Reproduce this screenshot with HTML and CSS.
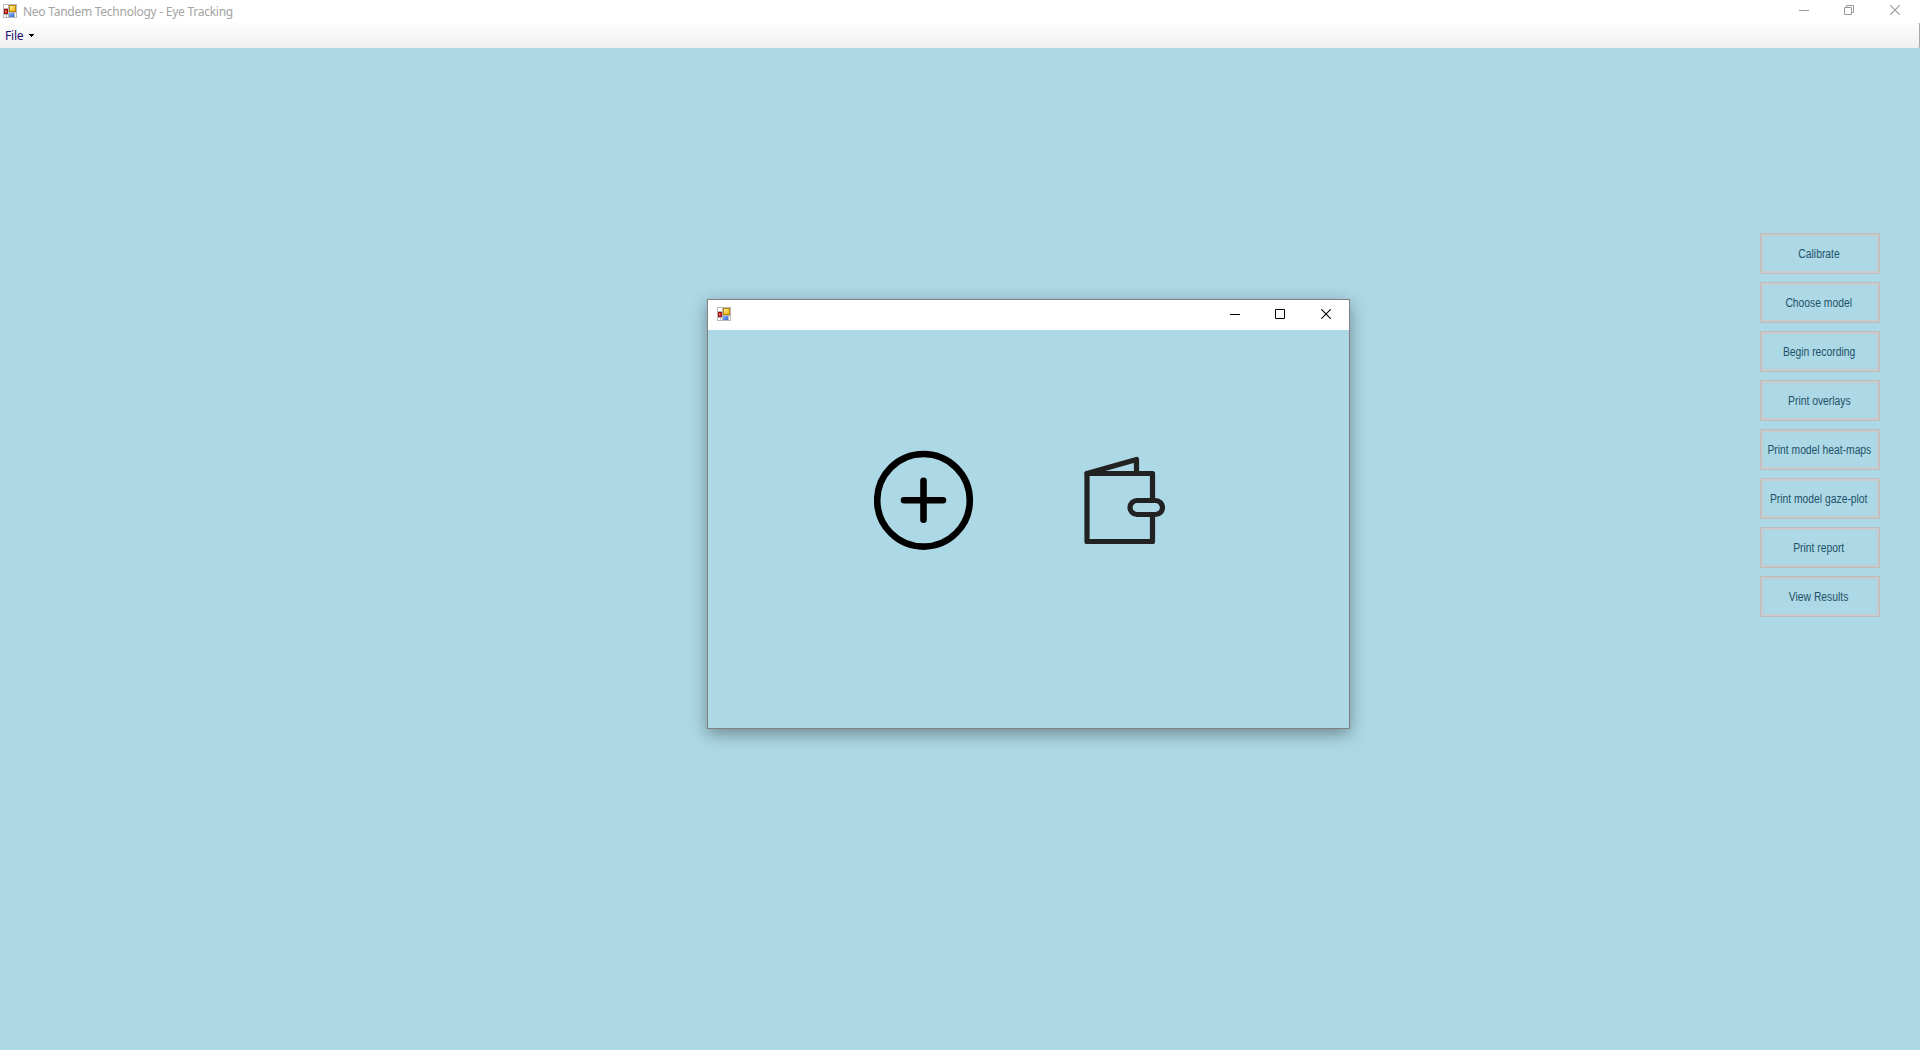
FILE: index.html
```html
<!DOCTYPE html>
<html lang="en">
<head>
<meta charset="utf-8">
<title>Neo Tandem Technology - Eye Tracking</title>
<link rel="stylesheet" href="styles.css">
</head>
<body>
<svg width="0" height="0" class="defs">
  <defs>
    <linearGradient id="gold" x1="0" y1="0" x2="1" y2="1"><stop offset="0" stop-color="#fff2a0"/><stop offset="1" stop-color="#f0b000"/></linearGradient>
    <linearGradient id="blue" x1="0" y1="0" x2="1" y2="1"><stop offset="0" stop-color="#8cb4ff"/><stop offset="1" stop-color="#3468c8"/></linearGradient>
    <symbol id="app" viewBox="0 0 14 14">
      <path fill="#b9b9b9" d="M0 0h14v14H0z"/>
      <path fill="#fff" d="M1 1h4v3H1zM1 11h2v2H1zM4 11h1v2H4zM12 9h1v4h-1z"/>
      <path fill="#b88400" d="M6 1h7v7H6z"/>
      <path fill="url(#gold)" d="M7 2h5v5H7z"/>
      <path fill="#a01010" d="M1 5h4v5H1z"/>
      <path fill="#d83a2c" d="M2 6h2v3H2z"/>
      <path fill="#f0b0a0" d="M2 7h1v1H2z"/>
      <path fill="url(#blue)" d="M6 9h5v4H6z"/>
    </symbol>
    <symbol id="close" viewBox="0 0 10 10"><path d="M.3.3l9.4 9.4M9.7.3L.3 9.7" fill="none" stroke="currentColor" stroke-width="1.1"/></symbol>
    <symbol id="min" viewBox="0 0 10 10"><path d="M0 5.5h10" stroke="currentColor"/></symbol>
  </defs>
</svg>
<header class="titlebar">
  <svg class="app-icon"><use href="#app"/></svg>
  <h1 class="title">Neo Tandem Technology - Eye Tracking</h1>
  <div class="controls">
    <svg><use href="#min"/></svg>
    <svg viewBox="0 0 10 10"><path d="M.5 2.5h7v7h-7zM2.5 2.5v-2h7v7h-2" fill="none" stroke="currentColor"/></svg>
    <svg class="last"><use href="#close"/></svg>
  </div>
</header>
<nav class="menubar">
  <span class="menu-item">File</span>
  <svg class="arrow" viewBox="0 0 5 3"><path d="M0 0h5v1H4v1H3v1H2V2H1V1H0z"/></svg>
</nav>
<main class="workspace">
  <div class="actions">
    <button class="action"><span>Calibrate</span></button>
    <button class="action"><span>Choose model</span></button>
    <button class="action"><span>Begin recording</span></button>
    <button class="action"><span>Print overlays</span></button>
    <button class="action"><span>Print model heat-maps</span></button>
    <button class="action"><span>Print model gaze-plot</span></button>
    <button class="action"><span>Print report</span></button>
    <button class="action"><span>View Results</span></button>
  </div>
</main>
<section class="dialog">
  <div class="dialog-bar">
    <svg class="app-icon"><use href="#app"/></svg>
    <div class="controls">
      <svg><use href="#min"/></svg>
      <svg viewBox="0 0 10 10"><path d="M.5.5h9v9h-9z" fill="none" stroke="currentColor"/></svg>
      <svg class="last"><use href="#close"/></svg>
    </div>
  </div>
  <div class="choices">
    <svg class="add" viewBox="0 0 100 100"><g fill="none" stroke="#000" stroke-width="6.6" stroke-linecap="round"><circle cx="49.500" cy="50.300" r="46.300"/><path d="M49.500 30.900v38.800M30 50.300h39"/></g></svg>
    <svg class="wallet" viewBox="0 0 82 90"><g fill="none" stroke="#222" stroke-width="5.2" stroke-linejoin="round" stroke-linecap="round"><path stroke-linecap="butt" d="M69.500 44.500V17.500H4v68h65.500V58"/><path d="M4 17.500L53.500 3.500v14"/><rect x="47" y="44.500" width="32.500" height="14" rx="7"/></g></svg>
  </div>
</section>
</body>
</html>
```
FILE: styles.css
```css
* { box-sizing: border-box; }
body {
  margin: 0;
  height: 1050px;
  overflow: hidden;
  display: flex;
  flex-direction: column;
  background: #add8e6;
  font-family: "Noto Sans", "Open Sans", sans-serif;
  font-size: 12px;
}
svg { display: block; flex: none; }
.defs { position: absolute; }
.app-icon { width: 14px; height: 14px; }
.titlebar {
  height: 23px;
  flex: none;
  display: flex;
  align-items: flex-start;
  padding: 4px 20px 0 3px;
  background: #fff;
  color: #999;
}
.title {
  margin: 0 auto 0 6px;
  font-size: 12px;
  font-weight: 400;
  line-height: 16px;
  letter-spacing: -0.26px;
  white-space: nowrap;
  color: #a3a3a3;
}
.controls { display: flex; gap: 35px; padding-top: 1px; }
.controls svg { width: 10px; height: 10px; }
.controls .last { margin-left: 1px; }
.menubar {
  height: 25px;
  flex: none;
  display: flex;
  align-items: center;
  padding: 0 0 1px 5px;
  background: linear-gradient(#fdfdfd, #f0f0f0);
  border-right: 1px solid #aaa;
  border-radius: 0 2px 2px 0;
}
.menu-item { color: #1a0f70; letter-spacing: -0.2px; }
.arrow { width: 5px; height: 3px; margin: 1px 0 0 6px; }
.workspace {
  flex: 1;
  display: flex;
  justify-content: flex-end;
  padding: 185px 40px 0 0;
}
.actions { display: flex; flex-direction: column; gap: 8px; }
.action {
  width: 120px;
  height: 41px;
  padding: 0 2px 0 0;
  border: 1px solid #bebcbc;
  box-shadow: inset 0 0 0 2px #cbcaca;
  background: transparent;
  color: #1d5267;
  font: 12px/14px "Liberation Sans", Arial, sans-serif;
  white-space: nowrap;
  display: flex;
  align-items: center;
  justify-content: center;
}
.action span { transform: scaleX(0.86); }
.dialog {
  position: absolute;
  left: 707px;
  top: 299px;
  width: 643px;
  height: 430px;
  border: 1px solid #808080;
  background: #add8e6;
  box-shadow: 0 5px 16px rgba(0, 0, 0, 0.36);
}
.dialog-bar {
  height: 30px;
  display: flex;
  justify-content: space-between;
  align-items: flex-start;
  padding: 7px 18px 0 9px;
  background: #fff;
  color: #000;
}
.dialog-bar .controls { padding-top: 2px; }
.choices { display: flex; padding: 120px 0 0 166px; }
.add { width: 100px; height: 100px; }
.wallet { width: 82px; height: 90px; margin: 6px 0 0 109px; }
```
